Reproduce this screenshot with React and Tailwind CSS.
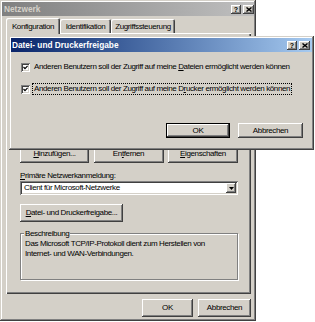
import React from "react";

const raised =
  "shadow-[inset_-1px_-1px_#404040,inset_1px_1px_#ffffff,inset_-2px_-2px_#808080]";
const windowFrame =
  "shadow-[inset_-1px_-1px_#404040,inset_1px_1px_#d4d0c8,inset_-2px_-2px_#808080,inset_2px_2px_#ffffff]";
const sunken =
  "shadow-[inset_1px_1px_#808080,inset_-1px_-1px_#ffffff,inset_2px_2px_#404040,inset_-2px_-2px_#d4d0c8]";

function Btn({ children, className = "", def = false }) {
  if (def) {
    return (
      <div className={`border border-black bg-[#d4d0c8] ${className}`}>
        <div className={`w-full h-full flex items-center justify-center ${raised}`}>
          {children}
        </div>
      </div>
    );
  }
  return (
    <div className={`bg-[#d4d0c8] flex items-center justify-center ${raised} ${className}`}>
      {children}
    </div>
  );
}

function TitleButtons() {
  return (
    <div className="flex items-center gap-[2px]">
      <div className={`w-[10px] h-[9px] bg-[#d4d0c8] flex items-center justify-center ${raised}`}>
        <span className="text-[7px] font-bold leading-[7px] text-black tracking-normal">?</span>
      </div>
      <div className={`w-[11px] h-[9px] bg-[#d4d0c8] flex items-center justify-center ${raised}`}>
        <svg width="6" height="5" viewBox="0 0 6 5">
          <path d="M0.5 0.5 L5.5 4.5 M5.5 0.5 L0.5 4.5" stroke="#000" strokeWidth="1.4" />
        </svg>
      </div>
    </div>
  );
}

function Checkbox() {
  return (
    <div className={`w-[9px] h-[9px] bg-white flex items-center justify-center shrink-0 ${sunken}`}>
      <svg width="5" height="5" viewBox="0 0 5 5">
        <path d="M0.5 2 L2 3.6 L4.6 0.8" stroke="#000" strokeWidth="1.2" fill="none" />
      </svg>
    </div>
  );
}

export default function App() {
  return (
    <div className="relative w-[315px] h-[322px] bg-white overflow-hidden font-['Liberation_Sans',Arial,sans-serif] text-[8px] tracking-[-0.38px] text-black">
      {/* Back window: Netzwerk */}
      <div className={`w-[256px] h-[321px] bg-[#d4d0c8] p-[2px] flex flex-col ${windowFrame}`}>
        <div className="h-[14px] flex items-center justify-between pl-[2px] bg-gradient-to-r from-[#808080] to-[#c0c0c0]">
          <span className="font-bold text-[8.3px] tracking-normal text-[#d4d0c8]">Netzwerk</span>
          <TitleButtons />
        </div>

        {/* Tabs */}
        <div className="mt-[2px] pl-[4px] flex items-end h-[16px] -mb-[1px] relative z-10">
          <div className="w-[54px] h-[16px] bg-[#d4d0c8] rounded-t-[2px] shadow-[inset_1px_1px_#ffffff,inset_-1px_0_#404040,inset_-2px_0_#808080] flex items-start justify-center pt-[3px]">
            Konfiguration
          </div>
          <div className="w-[51px] h-[14px] mb-[1px] rounded-t-[2px] shadow-[inset_1px_1px_#ffffff,inset_-1px_0_#404040,inset_-2px_0_#808080] flex items-start justify-center pt-[2px]">
            Identifikation
          </div>
          <div className="w-[64px] h-[14px] mb-[1px] rounded-t-[2px] shadow-[inset_1px_1px_#ffffff,inset_-1px_0_#404040,inset_-2px_0_#808080] flex items-start justify-center pt-[2px]">
            Zugriffssteuerung
          </div>
        </div>

        {/* Tab panel */}
        <div className="ml-[4px] w-[245px] h-[261px] pl-[14px] pr-[13px] pt-[22px] flex flex-col shadow-[inset_1px_1px_#ffffff,inset_-1px_-1px_#404040,inset_-2px_-2px_#808080]">
          <div className={`h-[88px] bg-white ${sunken}`} />
          <div className="mt-[2px] flex justify-between h-[18px]">
            <Btn className="w-[69px] h-[18px]">
              <span><u>H</u>inzufügen...</span>
            </Btn>
            <Btn className="w-[70px] h-[18px]">
              <span>En<u>t</u>fernen</span>
            </Btn>
            <Btn className="w-[70px] h-[18px]">
              <span><u>E</u>igenschaften</span>
            </Btn>
          </div>
          <div className="mt-[8px] h-[10px] leading-[10px]">
            <u>P</u>rimäre Netzwerkanmeldung:
          </div>
          <div className={`h-[14px] bg-white flex items-center pl-[4px] pr-[2px] ${sunken}`}>
            <span className="flex-1 leading-[10px]">Client für Microsoft-Netzwerke</span>
            <div className={`w-[10px] h-[10px] bg-[#d4d0c8] flex items-center justify-center ${raised}`}>
              <svg width="5" height="3" viewBox="0 0 5 3">
                <path d="M0 0 H5 L2.5 3 Z" fill="#000" />
              </svg>
            </div>
          </div>
          <Btn className="mt-[9px] w-[103px] h-[18px]">
            <span><u>D</u>atei- und Druckerfreigabe...</span>
          </Btn>
          <div className="relative mt-[11px] h-[47px] border border-[#808080] shadow-[1px_1px_#ffffff,inset_1px_1px_#ffffff] pl-[4px] pt-[5px]">
            <span className="absolute left-[3px] -top-[5px] px-[1px] bg-[#d4d0c8] leading-[9px]">Beschreibung</span>
            <div className="leading-[10px]">
              Das Microsoft TCP/IP-Protokoll dient zum Herstellen von
              <br />
              Internet- und WAN-Verbindungen.
            </div>
          </div>
        </div>

        {/* Bottom buttons */}
        <div className="mt-[5px] flex justify-end gap-[5px] pr-[3px]">
          <Btn className="w-[51px] h-[18px]">OK</Btn>
          <Btn className="w-[53px] h-[18px]">Abbrechen</Btn>
        </div>
      </div>

      {/* Front dialog: Datei- und Druckerfreigabe */}
      <div className={`absolute left-[9px] top-[36px] w-[305px] h-[114px] bg-[#d4d0c8] p-[2px] flex flex-col ${windowFrame}`}>
        <div className="h-[14px] flex items-center justify-between pl-[1px] pr-[2px] bg-gradient-to-r from-[#0a246a] to-[#a6caf0]">
          <span className="font-bold text-[8.3px] tracking-normal text-white">Datei- und Druckerfreigabe</span>
          <TitleButtons />
        </div>
        <div className="pt-[9px] pl-[10px] flex flex-col">
          <div className="h-[12px] flex items-center gap-[3px]">
            <Checkbox />
            <span className="px-[1px]">
              Anderen Benutzern soll der Zugriff auf meine <u>D</u>ateien ermöglicht werden können
            </span>
          </div>
          <div className="mt-[10px] h-[12px] flex items-center gap-[2px]">
            <Checkbox />
            <span className="px-[1px] border border-dotted border-black leading-[10px]">
              Anderen Benutzern soll der Zugriff auf meine D<u>r</u>ucker ermöglicht werden können
            </span>
          </div>
        </div>
        <div className="mt-[28px] flex justify-end gap-[8px] pr-[9px]">
          <Btn def className="w-[64px] h-[15px]">OK</Btn>
          <Btn className="w-[65px] h-[15px]">Abbrechen</Btn>
        </div>
      </div>
    </div>
  );
}
